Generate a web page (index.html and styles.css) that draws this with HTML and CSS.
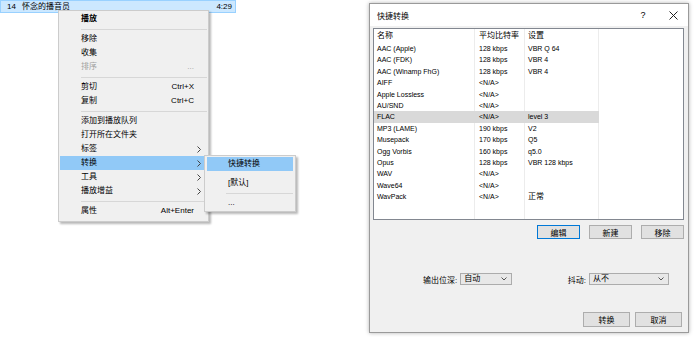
FILE: index.html
```html
<!DOCTYPE html>
<html lang="zh-CN">

<head>
    <meta charset="UTF-8">
    <title>快捷转换</title>
    <link rel="stylesheet" href="styles.css">
</head>

<body>
    <div class="desk">
        <div class="track">
            <span class="no">14</span>
            <span>怀念的播音员</span>
            <span class="len">4:29</span>
        </div>

        <div class="menu ctx">
            <div class="item bold"><span class="lbl">播放</span></div>
            <div class="sep"></div>
            <div class="item"><span class="lbl">移除</span></div>
            <div class="item"><span class="lbl">收集</span></div>
            <div class="item off"><span class="lbl">排序</span><span class="key">...</span></div>
            <div class="sep"></div>
            <div class="item"><span class="lbl">剪切</span><span class="key">Ctrl+X</span></div>
            <div class="item"><span class="lbl">复制</span><span class="key">Ctrl+C</span></div>
            <div class="sep"></div>
            <div class="item"><span class="lbl">添加到播放队列</span></div>
            <div class="item"><span class="lbl">打开所在文件夹</span></div>
            <div class="item"><span class="lbl">标签</span><span class="arrow"><svg width="4" height="7" viewBox="0 0 4 7"><polyline points="0.5,0.5 3.5,3.5 0.5,6.5" /></svg></span></div>
            <div class="item hl"><span class="lbl">转换</span><span class="arrow"><svg width="4" height="7" viewBox="0 0 4 7"><polyline points="0.5,0.5 3.5,3.5 0.5,6.5" /></svg></span></div>
            <div class="item"><span class="lbl">工具</span><span class="arrow"><svg width="4" height="7" viewBox="0 0 4 7"><polyline points="0.5,0.5 3.5,3.5 0.5,6.5" /></svg></span></div>
            <div class="item"><span class="lbl">播放增益</span><span class="arrow"><svg width="4" height="7" viewBox="0 0 4 7"><polyline points="0.5,0.5 3.5,3.5 0.5,6.5" /></svg></span></div>
            <div class="sep"></div>
            <div class="item"><span class="lbl">属性</span><span class="key">Alt+Enter</span></div>
        </div>

        <div class="menu sub">
            <div class="item hl"><span class="lbl">快捷转换</span></div>
            <div class="gap"></div>
            <div class="item"><span class="lbl">[默认]</span></div>
            <div class="sep"></div>
            <div class="item"><span class="lbl">...</span></div>
        </div>

        <div class="dialog">
            <div class="titlebar">
                <span class="caption">快捷转换</span>
                <span class="tb-btn">?</span>
                <span class="tb-btn">
                    <svg width="9" height="9" viewBox="0 0 9 9"><path d="M0.5 0.5L8.5 8.5M8.5 0.5L0.5 8.5" /></svg>
                </span>
            </div>

            <div class="dlg-body">
                <div class="list">
                    <div class="row head"><span>名称</span><span>平均比特率</span><span>设置</span><span></span></div>
                    <div class="row"><span>AAC (Apple)</span><span>128 kbps</span><span>VBR Q 64</span><span></span></div>
                    <div class="row"><span>AAC (FDK)</span><span>128 kbps</span><span>VBR 4</span><span></span></div>
                    <div class="row"><span>AAC (Winamp FhG)</span><span>128 kbps</span><span>VBR 4</span><span></span></div>
                    <div class="row"><span>AIFF</span><span>&lt;N/A&gt;</span><span></span><span></span></div>
                    <div class="row"><span>Apple Lossless</span><span>&lt;N/A&gt;</span><span></span><span></span></div>
                    <div class="row"><span>AU/SND</span><span>&lt;N/A&gt;</span><span></span><span></span></div>
                    <div class="row sel"><span>FLAC</span><span>&lt;N/A&gt;</span><span>level 3</span><span></span></div>
                    <div class="row"><span>MP3 (LAME)</span><span>190 kbps</span><span>V2</span><span></span></div>
                    <div class="row"><span>Musepack</span><span>170 kbps</span><span>Q5</span><span></span></div>
                    <div class="row"><span>Ogg Vorbis</span><span>160 kbps</span><span>q5.0</span><span></span></div>
                    <div class="row"><span>Opus</span><span>128 kbps</span><span>VBR 128 kbps</span><span></span></div>
                    <div class="row"><span>WAV</span><span>&lt;N/A&gt;</span><span></span><span></span></div>
                    <div class="row"><span>Wave64</span><span>&lt;N/A&gt;</span><span></span><span></span></div>
                    <div class="row"><span>WavPack</span><span>&lt;N/A&gt;</span><span class="cjk">正常</span><span></span></div>
                    <div class="row fill"><span></span><span></span><span></span><span></span></div>
                </div>

                <div class="list-btns">
                    <button class="btn focus">编辑</button>
                    <button class="btn">新建</button>
                    <button class="btn">移除</button>
                </div>

                <div class="opts">
                    <div class="opt depth">
                        <span>输出位深:</span>
                        <div class="combo w-depth">自动
                            <svg width="6" height="4" viewBox="0 0 6 4"><polyline points="0.5,0.5 3,3 5.5,0.5" /></svg>
                        </div>
                    </div>
                    <div class="opt dither">
                        <span>抖动:</span>
                        <div class="combo w-dither">从不
                            <svg width="6" height="4" viewBox="0 0 6 4"><polyline points="0.5,0.5 3,3 5.5,0.5" /></svg>
                        </div>
                    </div>
                </div>

                <div class="dlg-btns">
                    <button class="btn wide">转换</button>
                    <button class="btn wide">取消</button>
                </div>
            </div>
        </div>
    </div>
</body>

</html>
```

FILE: styles.css
```css
body {
    margin: 0;
    background-color: #fff;
    font-family: "Liberation Sans", "Noto Sans CJK SC", sans-serif;
    font-size: 8px;
    color: #000;
}

.desk {
    position: relative;
    width: 700px;
    height: 337px;
    overflow: hidden;
}

/* playlist row */
.track {
    width: 236px;
    height: 13px;
    box-sizing: border-box;
    background-color: #cce8ff;
    border: 1px solid #99d1ff;
    display: flex;
    align-items: center;
    padding: 0 3px 0 6px;
    line-height: 11px;
}

.track .no {
    width: 15px;
}

.track .len {
    margin-left: auto;
}

/* context menus */
.menu {
    position: absolute;
    box-sizing: border-box;
    background-color: #f0f0f0;
    border: 1px solid #cccccc;
    box-shadow: 2px 2px 2px rgba(0, 0, 0, 0.28);
}

.ctx {
    left: 58px;
    top: 10px;
    width: 151px;
    height: 212px;
    padding-top: 1px;
}

.sub {
    left: 204px;
    top: 155px;
    width: 92px;
    height: 57px;
    padding-top: 1px;
}

.item {
    height: 14px;
    line-height: 14px;
    display: flex;
    align-items: center;
    margin: 0 1px;
    padding-left: 21px;
}

.sub .item {
    margin: 0 2px;
    padding-left: 21px;
}

.item .lbl {
    flex: 1;
    white-space: nowrap;
}

.item .key {
    margin-right: 13px;
}

.item .arrow {
    width: 14px;
    margin-right: 1px;
    display: flex;
    justify-content: center;
}

.arrow polyline {
    fill: none;
    stroke: #444;
    stroke-width: 1;
}

.bold {
    font-weight: bold;
}

.off {
    color: #a0a0a0;
}

.hl {
    background-color: #91c9f7;
}

.sep {
    height: 6px;
    margin: 0 1px 0 22px;
    background: linear-gradient(#d7d7d7, #d7d7d7) no-repeat 0 50% / 100% 1px;
}

.sub .sep {
    margin: 0 2px 0 21px;
}

.gap {
    height: 5px;
}

/* dialog window */
.dialog {
    position: absolute;
    left: 369px;
    top: 3px;
    width: 320px;
    height: 330px;
    box-sizing: border-box;
    border: 1px solid #9a9a9a;
    background-color: #f0f0f0;
    box-shadow: 0 0 4px rgba(0, 0, 0, 0.3);
    display: flex;
    flex-direction: column;
}

.titlebar {
    height: 22px;
    background-color: #fff;
    display: flex;
    align-items: center;
    padding-left: 7px;
}

.caption {
    flex: 1;
}

.tb-btn {
    width: 30px;
    height: 22px;
    display: flex;
    align-items: center;
    justify-content: center;
    font-size: 9px;
}

.tb-btn path {
    stroke: #222;
    stroke-width: 1;
}

.dlg-body {
    flex: 1;
    padding: 2px 4px 0 3px;
    display: flex;
    flex-direction: column;
}

.list {
    height: 192px;
    box-sizing: border-box;
    border: 1px solid #828790;
    background-color: #fff;
    display: flex;
    flex-direction: column;
}

.row {
    display: grid;
    grid-template-columns: 101px 50px 74px 1fr;
    height: 11.4px;
    font-size: 7px;
}

.row > span {
    box-sizing: border-box;
    border-right: 1px solid #ececec;
    padding-left: 3px;
    line-height: 11.4px;
    white-space: nowrap;
    overflow: hidden;
}

.row > span:nth-child(2) {
    padding-left: 4px;
}

.row > span:last-child {
    border-right: none;
}

.row.head {
    height: 14px;
    font-size: 8px;
}

.row.head > span {
    line-height: 14px;
}

.row.fill {
    flex: 1;
    height: auto;
}

.row.sel > span:not(:last-child) {
    background-color: #d9d9d9;
    border-right-color: #d9d9d9;
}

.cjk {
    font-size: 8px;
}

.btn {
    box-sizing: border-box;
    font-family: inherit;
    font-size: 8px;
    color: #000;
    background-color: #e1e1e1;
    border: 1px solid #adadad;
    padding: 0;
    margin: 0;
}

.btn.focus {
    border-color: #0078d7;
}

.list-btns {
    display: flex;
    justify-content: flex-end;
    gap: 9px;
    margin-top: 5px;
}

.list-btns .btn {
    width: 43px;
    height: 14px;
}

.opts {
    display: flex;
    justify-content: space-between;
    align-items: center;
    margin-top: 34px;
    padding: 0 15px 0 50px;
}

.opt {
    display: flex;
    align-items: center;
    gap: 3px;
}

.combo {
    height: 12px;
    box-sizing: border-box;
    border: 1px solid #acacac;
    background-color: #e8e8e8;
    display: flex;
    align-items: center;
    justify-content: space-between;
    padding: 0 4px 0 3px;
    line-height: 10px;
}

.combo polyline {
    fill: none;
    stroke: #555;
    stroke-width: 1;
}

.w-depth {
    width: 52px;
}

.w-dither {
    width: 80px;
}

.dlg-btns {
    display: flex;
    justify-content: flex-end;
    gap: 5px;
    margin-top: 27px;
    padding-right: 2px;
}

.btn.wide {
    width: 47px;
    height: 15px;
}
```
